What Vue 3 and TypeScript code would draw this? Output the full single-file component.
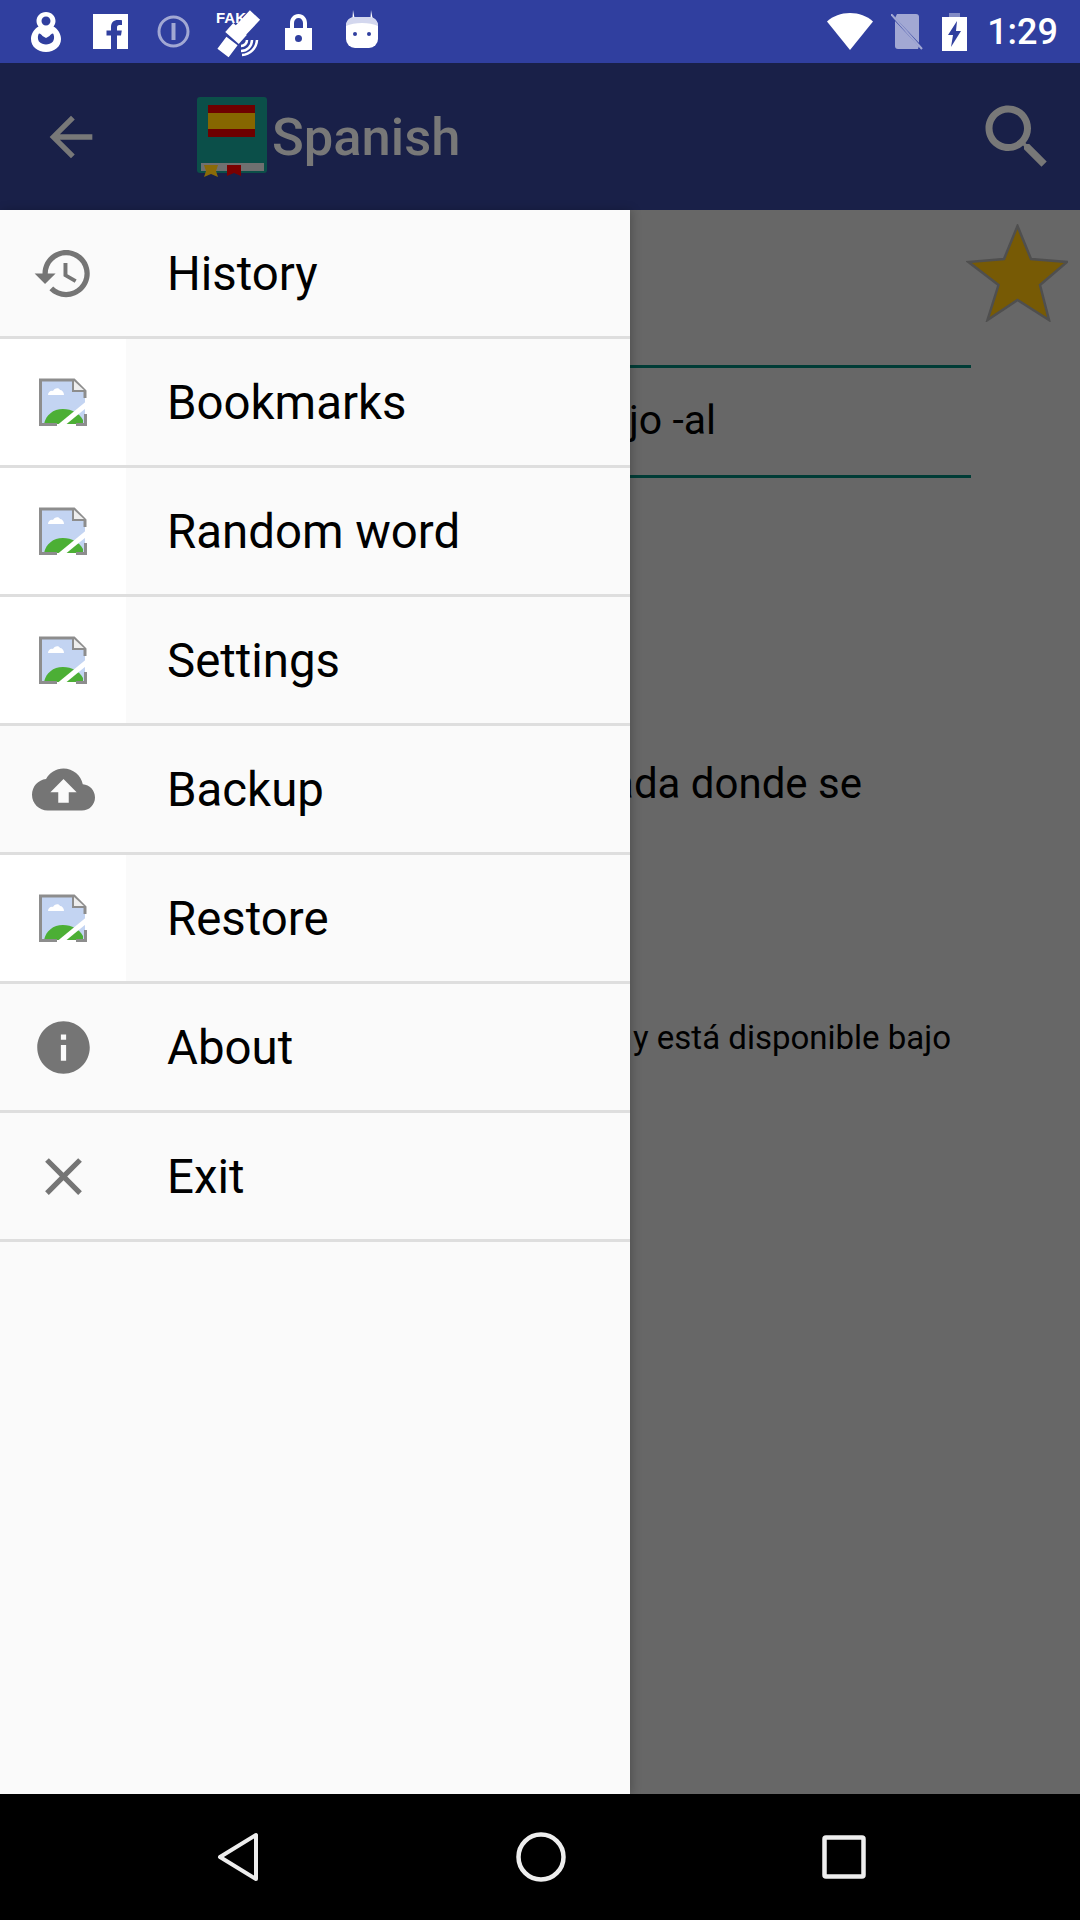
<script setup lang="ts">
interface MenuItem {
  label: string;
  icon?: string;
}

const menuItems: MenuItem[] = [
  {
    label: "History",
    icon: "M13 3c-4.97 0-9 4.03-9 9H1l3.89 3.89.07.14L9 12H6c0-3.87 3.13-7 7-7s7 3.13 7 7-3.13 7-7 7c-1.93 0-3.68-.79-4.94-2.06l-1.42 1.42C8.27 19.99 10.51 21 13 21c4.97 0 9-4.03 9-9s-4.03-9-9-9zm-1 5v5l4.28 2.54.72-1.21-3.5-2.08V8H12z",
  },
  { label: "Bookmarks" },
  { label: "Random word" },
  { label: "Settings" },
  {
    label: "Backup",
    icon: "M19.35 10.04C18.67 6.59 15.64 4 12 4 9.11 4 6.6 5.64 5.35 8.04 2.34 8.36 0 10.91 0 14c0 3.31 2.69 6 6 6h13c2.76 0 5-2.24 5-5 0-2.64-2.05-4.78-4.65-4.96zM14 13v4h-4v-4H7l5-5 5 5h-3z",
  },
  { label: "Restore" },
  {
    label: "About",
    icon: "M12 2C6.48 2 2 6.48 2 12s4.48 10 10 10 10-4.48 10-10S17.52 2 12 2zm1 15h-2v-6h2v6zm0-8h-2V7h2v2z",
  },
  {
    label: "Exit",
    icon: "M19 6.41L17.59 5 12 10.59 6.41 5 5 6.41 10.59 12 5 17.59 6.41 19 12 13.41 17.59 19 19 17.59 13.41 12z",
  },
];
</script>

<template>
  <div class="screen">
    <header class="status-bar">
      <div class="status-left">
        <svg width="30" height="40" viewBox="0 0 30 40">
          <path fill="#fff" fill-rule="evenodd" d="M15 0c5.500 0 9.500 4 9.500 9 0 2.200-.7 4-2 5.600 4.400 2.600 7.500 7.200 7.500 12.400C30 34.500 23.500 40 15 40S0 34.500 0 27c0-5.200 3.100-9.800 7.500-12.400-1.300-1.600-2-3.400-2-5.600C5.500 4 9.500 0 15 0zm0 4.500c-2.500 0-4.500 2-4.500 4.500s2 4.500 4.500 4.500 4.500-2 4.500-4.500-2-4.500-4.500-4.500z" />
          <path fill="#303f9f" d="M8 21.500c1.500 0 3 1.500 3.500 2.500l3.500 2 3.500-2c.5-1 2-2.500 3.500-2.500 1.500 2 1.500 6.500-.5 8.500-1.500 1.500-4 2.500-6.500 2.500s-5-1-6.500-2.500c-2-2-2-6.500-.5-8.500z" />
        </svg>
        <svg class="fb" width="35" height="35" viewBox="0 0 35 35">
          <path fill="#fff" d="M0 0h35v35H0z" />
          <path fill="#303f9f" d="M24 35V21.500h4l.8-5H24v-3c0-1.500.6-2.500 2.500-2.500H29V6.300C28 6.100 26.500 6 25 6c-4.300 0-7 2.500-7 7v3.500h-4.500v5H18V35z" />
        </svg>
        <svg class="dim info" width="33" height="33" viewBox="0 0 33 33">
          <circle cx="16.500" cy="16.500" r="14.500" fill="none" stroke="#fff" stroke-width="3" />
          <path fill="#fff" d="M14.500 8h4v17h-4z" />
        </svg>
        <svg class="gps" width="44" height="44" viewBox="0 0 44 44">
          <text class="fake" x="1" y="12">FAK</text>
          <path stroke="#fff" stroke-width="14" d="M8 42L17 30M25 20L40 4" />
          <path stroke="#fff" stroke-width="18" d="M17 27L25 18" />
          <path fill="none" stroke="#fff" stroke-width="2.500" d="M26 35a6 6 0 006-6M26 40a11 11 0 0011-11M27 44a16 16 0 0015-15" />
        </svg>
        <svg class="lock" width="27" height="36" viewBox="0 0 27 36">
          <path fill="#fff" fill-rule="evenodd" d="M5 14V9c0-5 3.500-9 8.500-9S22 4 22 9v5h5v22H0V14zm4 0h9V9c0-3-2-5-4.500-5S9 6 9 9zm4.500 7a3.500 3.500 0 100 7 3.500 3.500 0 000-7z" />
        </svg>
        <svg class="droid" width="32" height="38" viewBox="0 0 32 38">
          <path fill="#fff" d="M7 0l1.500 8h-2zM25 0l1.500 8h-2z" />
          <rect y="7" width="32" height="31" rx="9" fill="#fff" />
          <path fill="#d3d7ee" d="M0 16c0-6 4-9 9-9h14c5 0 9 3 9 9-4-2-10-3-16-3S4 14 0 16z" />
          <circle cx="9" cy="24" r="2" fill="#303f9f" />
          <circle cx="23" cy="24" r="2" fill="#303f9f" />
        </svg>
      </div>
      <div class="status-right">
        <svg width="46" height="37" viewBox="0 0 46 37">
          <path fill="#fff" d="M0 8.500C6 3 14 0 23 0s17 3 23 8.500L23 37z" />
        </svg>
        <svg class="dim" width="33" height="36" viewBox="0 0 33 36">
          <path fill="#fff" d="M6 0h19c2 0 3 1 3 3v29l-1 3H7c-2 0-3-1-3-3V4z" />
          <path stroke="#303f9f" stroke-width="2.500" d="M0 1l33 35" />
          <path stroke="#fff" stroke-width="2" d="M0 0l31 35" />
        </svg>
        <svg width="25" height="38" viewBox="0 0 25 38">
          <path fill="#fff" opacity=".4" d="M7 0h11v5H7z" />
          <path fill="#fff" d="M0 4h25v34H0z" />
          <path fill="#303f9f" d="M15 8L6 22h5l-2 12 10-16h-5z" />
        </svg>
        <span class="clock">1:29</span>
      </div>
    </header>

    <div class="app-bar">
      <svg class="back" width="64" height="64" viewBox="0 0 24 24">
        <path fill="#787878" d="M20 11H7.830l5.590-5.590L12 4l-8 8 8 8 1.410-1.410L7.830 13H20v-2z" />
      </svg>
      <svg class="book" width="72" height="80" viewBox="0 0 72 80">
        <rect x="1" width="70" height="76" rx="3" fill="#0b4f49" />
        <path fill="#6e0000" d="M12 8h47v32H12z" />
        <path fill="#866600" d="M12 16h47v16H12z" />
        <path fill="#707070" d="M5 66h63v8H5z" />
        <path fill="#8a6a08" d="M8 68h14l-2 6 2 6-7-3-7 3 2-6z" />
        <path fill="#7a0000" d="M31 68h14v11l-7-3-7 3z" />
      </svg>
      <span class="title">Spanish</span>
      <svg class="search" width="84" height="84" viewBox="0 0 24 24">
        <path fill="#787878" d="M15.500 14h-.79l-.28-.27C15.410 12.590 16 11.110 16 9.500 16 5.910 13.090 3 9.500 3S3 5.910 3 9.500 5.910 16 9.500 16c1.610 0 3.090-.59 4.230-1.570l.27.28v.79l5 4.990L20.490 19l-4.990-5zm-6 0C7.010 14 5 11.990 5 9.500S7.010 5 9.500 5 14 7.010 14 9.500 11.990 14 9.500 14z" />
      </svg>
    </div>

    <main class="main">
      <section class="content">
        <div class="star-row">
          <svg width="102" height="98" viewBox="0 0 102 98">
            <path fill="#775a05" stroke="#4f4f4f" stroke-width="2.500" d="M51.500 2L65 35l36 3-27 23 9 35-31.500-20L21.500 96l11-35-30-23 35.500-3z" />
          </svg>
        </div>
        <div class="word-field">viejo -al</div>
        <p class="para-large">Lengua hablada donde se</p>
        <p class="para-small">El texto es libre y está disponible bajo</p>
      </section>

      <nav class="drawer">
        <div v-for="item in menuItems" :key="item.label" class="menu-row">
          <div class="icon-cell" :class="{ broken: !item.icon }">
            <svg v-if="item.icon" width="63" height="63" viewBox="0 0 24 24">
              <path fill="#757575" :d="item.icon" />
            </svg>
            <svg v-else width="48" height="48" viewBox="0 0 48 48">
              <path fill="#c3d4f2" d="M2 2h33l11 11v33H2z" />
              <path fill="#fff" d="M9 17c0-3 3-5 5-4 1-3 6-4 7-1 2 0 4 2 4 5z" />
              <path fill="#4caf35" d="M5 46c2-9 9-15 19-15 9 0 16 4 20 11v4z" />
              <path fill="none" stroke="#8d8d8d" stroke-width="3" d="M46 20V13L35 2H1.500v44.500H18M37 46.500h9.500V36" />
              <path fill="#eee" stroke="#8d8d8d" stroke-width="2" d="M34 2v11h12" />
              <path stroke="#fff" stroke-width="5" d="M48 26L20 49" />
            </svg>
          </div>
          <span class="menu-label">{{ item.label }}</span>
        </div>
      </nav>
    </main>

    <footer class="nav-bar">
      <svg width="42" height="50" viewBox="0 0 42 50">
        <path fill="none" stroke="#eee" stroke-width="4" stroke-linejoin="round" d="M39 3v44L3 25z" />
      </svg>
      <svg width="50" height="50" viewBox="0 0 50 50">
        <circle cx="25" cy="25" r="22.500" fill="none" stroke="#eee" stroke-width="4.500" />
      </svg>
      <svg width="44" height="44" viewBox="0 0 44 44">
        <rect x="2.500" y="2.500" width="39" height="39" rx="1.500" fill="none" stroke="#eee" stroke-width="4.500" />
      </svg>
    </footer>
  </div>
</template>

<style scoped>
.screen {
  width: 1080px;
  height: 1920px;
  display: flex;
  flex-direction: column;
  overflow: hidden;
  font-family: Roboto, "Liberation Sans", sans-serif;
}

.status-bar {
  height: 63px;
  flex: none;
  background: #303f9f;
  display: flex;
  align-items: center;
  justify-content: space-between;
  padding: 0 22px 0 31px;
}

.status-left {
  display: flex;
  align-items: center;
}

.fb {
  margin-left: 32px;
}

.info {
  margin-left: 29px;
}

.gps {
  margin: 3px 0 0 25px;
  overflow: visible;
}

.lock {
  margin-left: 26px;
}

.droid {
  margin: 0 0 5px 34px;
}

.status-right {
  display: flex;
  align-items: center;
  gap: 18px;
}

.dim {
  opacity: 0.55;
}

.fake {
  font: 700 15px "Liberation Sans", sans-serif;
  fill: #fff;
}

.clock {
  color: #fff;
  font-size: 36px;
  font-weight: 500;
  margin-left: 2px;
}

.app-bar {
  height: 147px;
  flex: none;
  background: #192048;
  display: flex;
  align-items: center;
  padding: 0 21px 0 39px;
}

.book {
  margin-left: 93px;
}

.title {
  margin-left: 4px;
  color: #787878;
  font-size: 52.5px;
  font-weight: 500;
}

.search {
  margin-left: auto;
}

.main {
  flex: 1;
  position: relative;
  background: #676767;
}

.content {
  padding-right: 109px;
  color: #000;
  white-space: nowrap;
  text-align: right;
}

.star-row {
  height: 155px;
  margin-right: -97px;
  padding-top: 14px;
  box-sizing: border-box;
}

.word-field {
  height: 113px;
  box-sizing: border-box;
  border-top: 3px solid #003c36;
  border-bottom: 3px solid #003c36;
  font-size: 41px;
  line-height: 105px;
  padding-right: 255px;
}

.para-large {
  margin: 0;
  padding: 283px 109px 0 0;
  font-size: 42px;
  line-height: 46px;
}

.para-small {
  margin: 0;
  padding: 211px 20px 0 0;
  font-size: 33px;
  line-height: 40px;
}

.drawer {
  position: absolute;
  left: 0;
  top: 0;
  bottom: 0;
  width: 630px;
  background: #fafafa;
  box-shadow: 2px 0 9px rgba(0, 0, 0, 0.22);
}

.menu-row {
  height: 129px;
  box-sizing: border-box;
  border-bottom: 3px solid #dedede;
  display: flex;
  align-items: center;
}

.icon-cell {
  width: 126px;
  height: 100%;
  flex: none;
  display: flex;
  align-items: center;
  justify-content: center;
}

.icon-cell.broken {
  background: #fff;
}

.menu-label {
  margin-left: 41px;
  padding-top: 2px;
  color: #000;
  font-size: 47.4px;
}

.nav-bar {
  height: 126px;
  flex: none;
  background: #000;
  display: flex;
  align-items: center;
  justify-content: space-between;
  padding: 0 214px 0 217px;
  box-sizing: border-box;
}
</style>

<style>
html,
body {
  margin: 0;
  background: #000;
}
</style>
